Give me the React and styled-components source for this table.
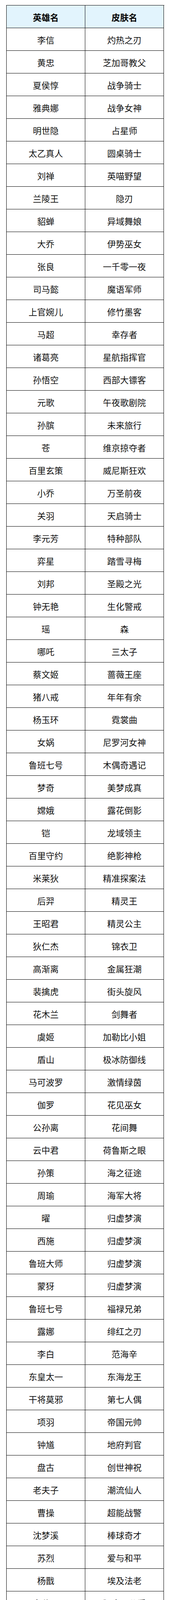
import React from "react";
import styled, { createGlobalStyle } from "styled-components";

const GlobalStyle = createGlobalStyle`
  html, body {
    margin: 0;
    padding: 0;
    background: #ffffff;
  }
  body {
    font-family: "Microsoft YaHei", "Noto Sans CJK SC", "Noto Sans", sans-serif;
  }
`;

const rows = [
  ["李信", "灼热之刃"],
  ["黄忠", "芝加哥教父"],
  ["夏侯惇", "战争骑士"],
  ["雅典娜", "战争女神"],
  ["明世隐", "占星师"],
  ["太乙真人", "圆桌骑士"],
  ["刘禅", "英喵野望"],
  ["兰陵王", "隐刃"],
  ["貂蝉", "异域舞娘"],
  ["大乔", "伊势巫女"],
  ["张良", "一千零一夜"],
  ["司马懿", "魔语军师"],
  ["上官婉儿", "修竹墨客"],
  ["马超", "幸存者"],
  ["诸葛亮", "星航指挥官"],
  ["孙悟空", "西部大镖客"],
  ["元歌", "午夜歌剧院"],
  ["孙膑", "未来旅行"],
  ["苍", "维京掠夺者"],
  ["百里玄策", "威尼斯狂欢"],
  ["小乔", "万圣前夜"],
  ["关羽", "天启骑士"],
  ["李元芳", "特种部队"],
  ["弈星", "踏雪寻梅"],
  ["刘邦", "圣殿之光"],
  ["钟无艳", "生化警戒"],
  ["瑶", "森"],
  ["哪吒", "三太子"],
  ["蔡文姬", "蔷薇王座"],
  ["猪八戒", "年年有余"],
  ["杨玉环", "霓裳曲"],
  ["女娲", "尼罗河女神"],
  ["鲁班七号", "木偶奇遇记"],
  ["梦奇", "美梦成真"],
  ["嫦娥", "露花倒影"],
  ["铠", "龙域领主"],
  ["百里守约", "绝影神枪"],
  ["米莱狄", "精准探案法"],
  ["后羿", "精灵王"],
  ["王昭君", "精灵公主"],
  ["狄仁杰", "锦衣卫"],
  ["高渐离", "金属狂潮"],
  ["裴擒虎", "街头旋风"],
  ["花木兰", "剑舞者"],
  ["虞姬", "加勒比小姐"],
  ["盾山", "极冰防御线"],
  ["马可波罗", "激情绿茵"],
  ["伽罗", "花见巫女"],
  ["公孙离", "花间舞"],
  ["云中君", "荷鲁斯之眼"],
  ["孙策", "海之征途"],
  ["周瑜", "海军大将"],
  ["曜", "归虚梦演"],
  ["西施", "归虚梦演"],
  ["鲁班大师", "归虚梦演"],
  ["蒙犽", "归虚梦演"],
  ["鲁班七号", "福禄兄弟"],
  ["露娜", "绯红之刃"],
  ["李白", "范海辛"],
  ["东皇太一", "东海龙王"],
  ["干将莫邪", "第七人偶"],
  ["项羽", "帝国元帅"],
  ["钟馗", "地府判官"],
  ["盘古", "创世神祝"],
  ["老夫子", "潮流仙人"],
  ["曹操", "超能战警"],
  ["沈梦溪", "棒球奇才"],
  ["苏烈", "爱与和平"],
  ["杨戬", "埃及法老"],
  ["鬼谷子", "阿摩司公爵"],
];

const Page = styled.div`
  position: relative;
  height: 4149px;
  padding-top: 13px;
  box-sizing: border-box;
  overflow: hidden;
`;

const Table = styled.div`
  margin-left: 16px;
  width: 403px;
  display: grid;
  grid-template-columns: 201px 201px;
  border-top: 1px solid #000;
  border-left: 1px solid #000;
`;

const Cell = styled.div`
  height: 58px;
  box-sizing: border-box;
  border-right: 1px solid #000;
  border-bottom: 1px solid #000;
  display: flex;
  align-items: center;
  justify-content: center;
  font-size: 22px;
  line-height: 30px;
  color: ${(p) => (p.$head ? "#000" : "#111")};
  font-weight: ${(p) => (p.$head ? 700 : 400)};
  background: ${(p) => (p.$head ? "#e2f4fd" : "#fff")};
  white-space: nowrap;
`;

const Watermark = styled.div`
  position: absolute;
  left: 232px;
  right: 0;
  top: 4098px;
  bottom: 0;
  background: #fff;
  display: flex;
  align-items: flex-start;
  padding-top: 9px;
  padding-left: 16px;
  gap: 6px;
  box-sizing: border-box;
`;

const BrandText = styled.span`
  font-family: "Noto Sans CJK SC", "Noto Sans", sans-serif;
  font-weight: 900;
  font-size: 25px;
  line-height: 30px;
  color: #3a3a3a;
  letter-spacing: -0.5px;
`;

const LogoIcon = () => (
  <svg width="42" height="34" viewBox="0 0 42 34">
    <polygon points="2,17 21,3 40,17 21,31" fill="#2f8fe0" />
    <polygon points="11,17 21,10 31,17 21,24" fill="#fff" />
    <polygon points="2,17 21,31 21,34 2,21" fill="#1b5aa6" />
    <polygon points="21,31 40,17 40,20 21,34" fill="#2470c0" />
    <polygon points="11,17 21,10 21,13 13,18.5" fill="#1b5aa6" />
  </svg>
);

export default function App() {
  return (
    <Page>
      <GlobalStyle />
      <Table>
        <Cell $head>英雄名</Cell>
        <Cell $head>皮肤名</Cell>
        {rows.map(([hero, skin], i) => (
          <React.Fragment key={i}>
            <Cell>{hero}</Cell>
            <Cell>{skin}</Cell>
          </React.Fragment>
        ))}
      </Table>
      <Watermark>
        <LogoIcon />
        <BrandText>悠万游戏园</BrandText>
      </Watermark>
    </Page>
  );
}
